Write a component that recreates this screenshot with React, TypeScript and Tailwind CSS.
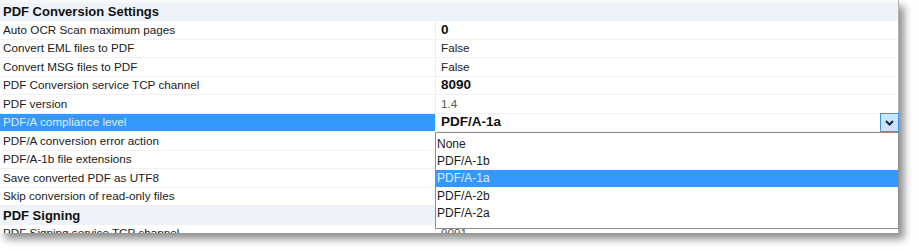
import React from "react";

type Row = { label: string; value: string; bold?: boolean; gray?: boolean; selected?: boolean; header?: boolean };

const rows: Row[] = [
  { label: "PDF Conversion Settings", value: "", header: true },
  { label: "Auto OCR Scan maximum pages", value: "0", bold: true },
  { label: "Convert EML files to PDF", value: "False" },
  { label: "Convert MSG files to PDF", value: "False" },
  { label: "PDF Conversion service TCP channel", value: "8090", bold: true },
  { label: "PDF version", value: "1.4", gray: true },
  { label: "PDF/A compliance level", value: "PDF/A-1a", bold: true, selected: true },
  { label: "PDF/A conversion error action", value: "" },
  { label: "PDF/A-1b file extensions", value: "" },
  { label: "Save converted PDF as UTF8", value: "" },
  { label: "Skip conversion of read-only files", value: "" },
  { label: "PDF Signing", value: "", header: true },
  { label: "PDF Signing service TCP channel", value: "9091", gray: true },
];

const options = ["None", "PDF/A-1b", "PDF/A-1a", "PDF/A-2b", "PDF/A-2a"];

export default function App() {
  return (
    <div className="w-[919px] h-[251px] bg-white" style={{ fontFamily: '"Liberation Sans", Arial, sans-serif' }}>
      <div className="relative w-[899px] h-[233px]">
        <div className="w-[899px] h-[233px] overflow-hidden bg-white border-r border-[#b4b4b4] shadow-[5px_6px_8px_rgba(0,0,0,0.45)] flex flex-col">
          <div className="h-[3px] bg-[#f7f8f9] shrink-0" />
          {rows.map((r, i) =>
            r.header ? (
              <div
                key={i}
                className={`flex items-center shrink-0 bg-[#eef3f9] pl-[3px] text-[13px] font-bold text-[#111] ${i === 0 ? "h-[18px]" : "h-[18.5px]"}`}
              >
                {r.label}
              </div>
            ) : (
              <div key={i} className="flex h-[18.5px] shrink-0 border-b border-[#f1f1f1]">
                <div
                  className={`w-[435px] shrink-0 flex items-center pl-[3px] text-[11.7px] ${
                    r.selected ? "bg-[#3399ff] text-[#dcecff]" : "text-[#1a1a1a]"
                  }`}
                >
                  {r.label}
                </div>
                <div className="w-px shrink-0 bg-[#ededed]" />
                <div
                  className={`flex-1 flex items-center pl-[5px] ${r.bold ? "text-[13.5px] font-bold text-[#111]" : "text-[11.7px]"} ${
                    r.gray ? "text-[#555]" : !r.bold ? "text-[#222]" : ""
                  }`}
                >
                  {r.value}
                </div>
              </div>
            )
          )}
        </div>

        {/* combo button */}
        <div className="absolute left-[880px] top-[113px] w-[19px] h-[19px] bg-[#cce4f7] border border-[#3c97e6] flex items-center justify-center">
          <svg width="9" height="6" viewBox="0 0 9 6">
            <path d="M1 1 L4.5 4.5 L8 1" fill="none" stroke="#1e2a3a" strokeWidth="2" />
          </svg>
        </div>

        {/* dropdown list */}
        <div className="absolute left-[435px] top-[132px] w-[464px] h-[97px] bg-white border border-[#8c8c8c] pt-[2px] flex flex-col">
          {options.map((o) => (
            <div
              key={o}
              className={`h-[17.3px] flex items-center pl-[1px] text-[12px] ${
                o === "PDF/A-1a" ? "bg-[#3399ff] text-[#dcecff]" : "text-[#1a1a1a]"
              }`}
            >
              {o}
            </div>
          ))}
        </div>
      </div>
    </div>
  );
}
